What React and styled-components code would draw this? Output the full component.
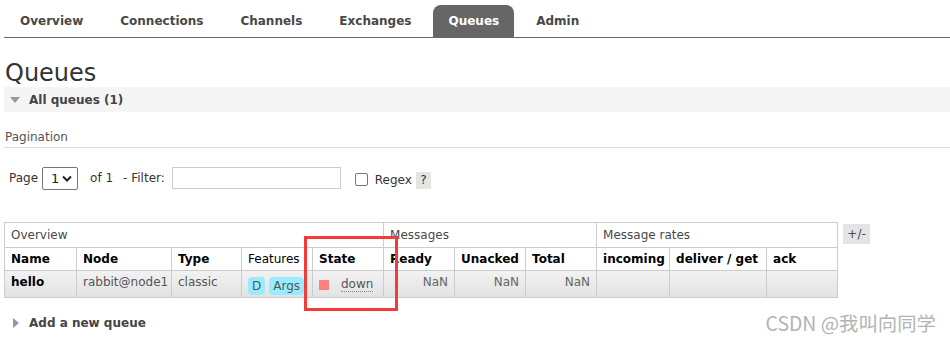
import styled, { createGlobalStyle } from "styled-components";

const GlobalStyle = createGlobalStyle`
    html, body {
        margin: 0;
        padding: 0;
        background: #ffffff;
    }
    body {
        font-family: "DejaVu Sans", Verdana, sans-serif;
        font-size: 12px;
        color: #484848;
    }
`;

const Page = styled.div`
    position: relative;
    width: 950px;
    height: 341px;
    overflow: hidden;
    padding: 0 0 0 4px;
    box-sizing: border-box;
`;

const Tabs = styled.ul`
    display: flex;
    list-style: none;
    margin: 0;
    padding: 5px 0 0 1px;
    height: 32px;
    border-bottom: 1px solid #666666;
`;

const Tab = styled.li`
    height: 32px;
    padding: 0 15px;
    margin-right: 7px;
    display: flex;
    align-items: center;
    font-weight: bold;
    font-size: 12px;
    border-radius: 8px 8px 0 0;
    color: ${(p) => (p.$active ? "#ffffff" : "#484848")};
    background: ${(p) => (p.$active ? "#666666" : "transparent")};
`;

const Title = styled.h1`
    margin: 0;
    padding: 21px 0 0 1px;
    font-size: 24px;
    font-weight: normal;
    line-height: 28px;
    color: #333333;
`;

const Section = styled.div`
    display: flex;
    align-items: center;
    gap: 9px;
    height: 25px;
    padding-left: 6px;
    background: ${(p) => (p.$bar ? "#f5f5f5" : "transparent")};
    font-weight: bold;
    font-size: 12px;
    color: #444444;
`;

const TriDown = styled.span`
    width: 0;
    height: 0;
    border-left: 5px solid transparent;
    border-right: 5px solid transparent;
    border-top: 6px solid #999999;
`;

const TriRight = styled.span`
    width: 0;
    height: 0;
    margin-left: 3px;
    border-top: 5px solid transparent;
    border-bottom: 5px solid transparent;
    border-left: 6px solid #999999;
    margin-right: 1px;
`;

const PaginationHead = styled.div`
    margin-top: 18px;
    padding: 0 0 3px 1px;
    border-bottom: 1px solid #dddddd;
    color: #555555;
    font-size: 12px;
`;

const PagerRow = styled.div`
    display: flex;
    align-items: center;
    margin-top: 18px;
    padding-left: 5px;
    height: 24px;
    color: #333333;
`;

const Select = styled.div`
    display: flex;
    align-items: center;
    justify-content: space-between;
    box-sizing: border-box;
    width: 36px;
    height: 23px;
    margin: 0 12px 0 4px;
    padding: 0 5px 0 8px;
    border: 1px solid #767676;
    border-radius: 2px;
    font-size: 13px;
    color: #222222;
`;

const Label = styled.span`
    margin-right: ${(p) => p.$mr || 0}px;
    margin-top: ${(p) => p.$mt || 0}px;
`;

const Input = styled.input`
    box-sizing: border-box;
    width: 169px;
    height: 22px;
    margin: 0 14px 0 7px;
    border: 1px solid #cccccc;
`;

const Check = styled.span`
    box-sizing: border-box;
    width: 13px;
    height: 13px;
    border: 1px solid #767676;
    border-radius: 2px;
    margin: 2px 7px 0 0;
`;

const Help = styled.span`
    display: inline-flex;
    align-items: center;
    justify-content: center;
    width: 15px;
    height: 17px;
    margin: 4px 0 0 4px;
    background: #e4e4e4;
    font-size: 12px;
`;

const TableWrap = styled.div`
    display: flex;
    align-items: flex-start;
    gap: 5px;
    margin-top: 32px;
`;

const Table = styled.table`
    border-collapse: collapse;
    table-layout: fixed;
    width: 833px;
`;

const Col = styled.col`
    width: ${(p) => p.$w}px;
`;

const Th = styled.th`
    border: 1px solid #cccccc;
    height: ${(p) => (p.$group ? 25 : 23)}px;
    padding: 0 6px;
    box-sizing: border-box;
    text-align: left;
    font-weight: ${(p) => (p.$normal ? "normal" : "bold")};
    color: ${(p) => (p.$group ? "#484848" : "#000000")};
    white-space: nowrap;
    overflow: hidden;
`;

const Row = styled.tr`
    background: linear-gradient(#f2f2f2, #e2e2e2);
`;

const Td = styled.td`
    border: 1px solid #cccccc;
    height: 27px;
    padding: 0 6px;
    box-sizing: border-box;
    white-space: nowrap;
    overflow: hidden;
    text-align: ${(p) => (p.$right ? "right" : "left")};
    font-weight: ${(p) => (p.$bold ? "bold" : "normal")};
    color: ${(p) => (p.$bold ? "#000000" : p.$muted ? "#666666" : "#555555")};
    vertical-align: ${(p) => (p.$top ? "top" : "middle")};
    padding-top: ${(p) => (p.$top ? 4 : 0)}px;
`;

const Badges = styled.div`
    display: flex;
    gap: 4px;
    margin-top: 4px;
`;

const Badge = styled.span`
    display: inline-flex;
    align-items: center;
    justify-content: center;
    min-width: 17px;
    box-sizing: border-box;
    height: 18px;
    padding: 0 4px;
    background: #99ebff;
    border-radius: 4px;
    color: #555555;
`;

const StateCell = styled.div`
    display: flex;
    align-items: center;
    gap: 12px;
    margin-top: 1px;
`;

const Dot = styled.span`
    width: 10px;
    height: 10px;
    background: #ff7f7f;
`;

const Down = styled.span`
    border-bottom: 1px dotted #888888;
    line-height: 14px;
`;

const ToggleBtn = styled.span`
    display: inline-flex;
    align-items: center;
    justify-content: center;
    width: 27px;
    height: 20px;
    margin-top: 2px;
    background: #e4e4e4;
    color: #484848;
`;

const AddQueue = styled(Section)`
    margin-top: 12px;
`;

const Highlight = styled.div`
    position: absolute;
    left: 304px;
    top: 236px;
    width: 94px;
    height: 75px;
    box-sizing: border-box;
    border: 3px solid #f23b3b;
    pointer-events: none;
`;

const Watermark = styled.div`
    position: absolute;
    right: 14px;
    top: 308px;
    font-family: "Noto Sans CJK SC", "DejaVu Sans", sans-serif;
    font-size: 19.4px;
    color: #b3b3b3;
`;

const tabs = ["Overview", "Connections", "Channels", "Exchanges", "Queues", "Admin"];

const cols = [
    { name: "Name", w: 72 },
    { name: "Node", w: 95 },
    { name: "Type", w: 70 },
    { name: "Features", w: 71, normal: true },
    { name: "State", w: 71 },
    { name: "Ready", w: 71 },
    { name: "Unacked", w: 71 },
    { name: "Total", w: 71 },
    { name: "incoming", w: 73 },
    { name: "deliver / get", w: 97 },
    { name: "ack", w: 71 },
];

const App = () => {
    return (
        <Page>
            <GlobalStyle />
            <Tabs>
                {tabs.map((t) => (
                    <Tab key={t} $active={t === "Queues"}>{t}</Tab>
                ))}
            </Tabs>

            <Title>Queues</Title>
            <Section $bar>
                <TriDown />
                All queues (1)
            </Section>

            <PaginationHead>Pagination</PaginationHead>
            <PagerRow>
                <Label>Page</Label>
                <Select>
                    1
                    <svg width="10" height="7" viewBox="0 0 10 7">
                        <path d="M1 1.5 L5 5.5 L9 1.5" fill="none" stroke="#222" strokeWidth="2" />
                    </svg>
                </Select>
                <Label $mr={10}>of 1</Label>
                <Label>- Filter:</Label>
                <Input type="text" />
                <Check />
                <Label $mt={3}>Regex</Label>
                <Help>?</Help>
            </PagerRow>

            <TableWrap>
                <Table>
                    <colgroup>
                        {cols.map((c) => (
                            <Col key={c.name} $w={c.w} />
                        ))}
                    </colgroup>
                    <thead>
                        <tr>
                            <Th $group $normal colSpan={5}>Overview</Th>
                            <Th $group $normal colSpan={3}>Messages</Th>
                            <Th $group $normal colSpan={3}>Message rates</Th>
                        </tr>
                        <tr>
                            {cols.map((c) => (
                                <Th key={c.name} $normal={c.normal}>{c.name}</Th>
                            ))}
                        </tr>
                    </thead>
                    <tbody>
                        <Row>
                            <Td $bold $top>hello</Td>
                            <Td $top>rabbit@node1</Td>
                            <Td $top>classic</Td>
                            <Td>
                                <Badges>
                                    <Badge>D</Badge>
                                    <Badge>Args</Badge>
                                </Badges>
                            </Td>
                            <Td>
                                <StateCell>
                                    <Dot />
                                    <Down>down</Down>
                                </StateCell>
                            </Td>
                            <Td $right $top $muted>NaN</Td>
                            <Td $right $top $muted>NaN</Td>
                            <Td $right $top $muted>NaN</Td>
                            <Td />
                            <Td />
                            <Td />
                        </Row>
                    </tbody>
                </Table>
                <ToggleBtn>+/-</ToggleBtn>
            </TableWrap>

            <AddQueue>
                <TriRight />
                Add a new queue
            </AddQueue>

            <Highlight />
            <Watermark>CSDN @我叫向同学</Watermark>
        </Page>
    );
};

export default App;
